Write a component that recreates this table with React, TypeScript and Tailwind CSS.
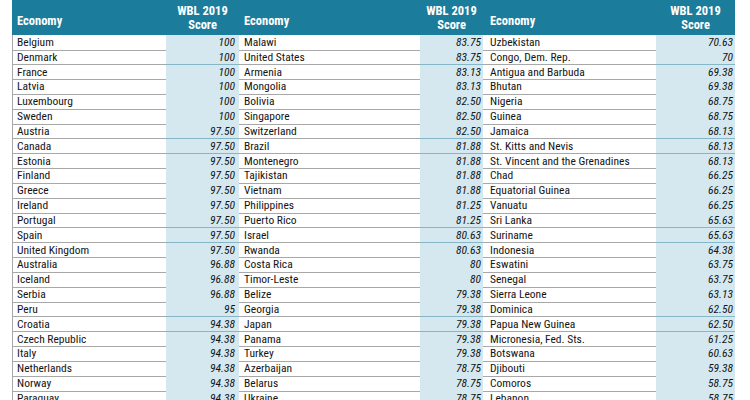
const col1: [string, string][] = [
  ["Belgium", "100"],
  ["Denmark", "100"],
  ["France", "100"],
  ["Latvia", "100"],
  ["Luxembourg", "100"],
  ["Sweden", "100"],
  ["Austria", "97.50"],
  ["Canada", "97.50"],
  ["Estonia", "97.50"],
  ["Finland", "97.50"],
  ["Greece", "97.50"],
  ["Ireland", "97.50"],
  ["Portugal", "97.50"],
  ["Spain", "97.50"],
  ["United Kingdom", "97.50"],
  ["Australia", "96.88"],
  ["Iceland", "96.88"],
  ["Serbia", "96.88"],
  ["Peru", "95"],
  ["Croatia", "94.38"],
  ["Czech Republic", "94.38"],
  ["Italy", "94.38"],
  ["Netherlands", "94.38"],
  ["Norway", "94.38"],
  ["Paraguay", "94.38"],
];

const col2: [string, string][] = [
  ["Malawi", "83.75"],
  ["United States", "83.75"],
  ["Armenia", "83.13"],
  ["Mongolia", "83.13"],
  ["Bolivia", "82.50"],
  ["Singapore", "82.50"],
  ["Switzerland", "82.50"],
  ["Brazil", "81.88"],
  ["Montenegro", "81.88"],
  ["Tajikistan", "81.88"],
  ["Vietnam", "81.88"],
  ["Philippines", "81.25"],
  ["Puerto Rico", "81.25"],
  ["Israel", "80.63"],
  ["Rwanda", "80.63"],
  ["Costa Rica", "80"],
  ["Timor-Leste", "80"],
  ["Belize", "79.38"],
  ["Georgia", "79.38"],
  ["Japan", "79.38"],
  ["Panama", "79.38"],
  ["Turkey", "79.38"],
  ["Azerbaijan", "78.75"],
  ["Belarus", "78.75"],
  ["Ukraine", "78.75"],
];

const col3: [string, string][] = [
  ["Uzbekistan", "70.63"],
  ["Congo, Dem. Rep.", "70"],
  ["Antigua and Barbuda", "69.38"],
  ["Bhutan", "69.38"],
  ["Nigeria", "68.75"],
  ["Guinea", "68.75"],
  ["Jamaica", "68.13"],
  ["St. Kitts and Nevis", "68.13"],
  ["St. Vincent and the Grenadines", "68.13"],
  ["Chad", "66.25"],
  ["Equatorial Guinea", "66.25"],
  ["Vanuatu", "66.25"],
  ["Sri Lanka", "65.63"],
  ["Suriname", "65.63"],
  ["Indonesia", "64.38"],
  ["Eswatini", "63.75"],
  ["Senegal", "63.75"],
  ["Sierra Leone", "63.13"],
  ["Dominica", "62.50"],
  ["Papua New Guinea", "62.50"],
  ["Micronesia, Fed. Sts.", "61.25"],
  ["Botswana", "60.63"],
  ["Djibouti", "59.38"],
  ["Comoros", "58.75"],
  ["Lebanon", "58.75"],
];

const font = {
  fontFamily: '"Liberation Sans Narrow", "Roboto Condensed", "Liberation Sans", sans-serif',
};

function HeaderPair({ last }: { last?: boolean }) {
  return (
    <>
      <div className={`flex items-end pb-[4px] ${last ? "pl-[7px]" : "pl-[5px]"}`}>Economy</div>
      <div className="flex flex-col items-center justify-center leading-[14px] pt-[1px]">
        <span>WBL 2019</span>
        <span>Score</span>
      </div>
    </>
  );
}

export default function App() {
  return (
    <div className="w-[750px] h-[400px] overflow-hidden bg-white" style={font}>
      <div className="ml-[12px] w-[723px]">
        <div className="grid grid-cols-[154px_73px_181px_63px_173px_79px] h-[35px] bg-[#1b7c9b] text-white font-bold text-[12.5px]">
          <HeaderPair />
          <HeaderPair />
          <HeaderPair last />
        </div>
        <div className="border-l border-[#a8a8a8]">
          {col1.map((row, i) => (
            <div
              key={i}
              className="grid grid-cols-[153px_73px_181px_63px_173px_79px] h-[14.83px] text-[11.5px] leading-[14.5px] text-[#141414]"
            >
              <div className="pl-[4px] border-b border-[#a8a8a8] truncate">{row[0]}</div>
              <div className="pr-[4px] text-right italic bg-[#d6e8ef] border-b border-[#86b7c9]">{row[1]}</div>
              <div className="pl-[5px] border-b border-[#a8a8a8] truncate">{col2[i][0]}</div>
              <div className="pr-[2px] text-right italic bg-[#d6e8ef] border-b border-[#86b7c9]">{col2[i][1]}</div>
              <div className="pl-[7px] border-b border-[#a8a8a8] whitespace-nowrap">{col3[i][0]}</div>
              <div className="pr-[2px] text-right italic bg-[#d6e8ef] border-b border-[#86b7c9]">{col3[i][1]}</div>
            </div>
          ))}
        </div>
      </div>
    </div>
  );
}
